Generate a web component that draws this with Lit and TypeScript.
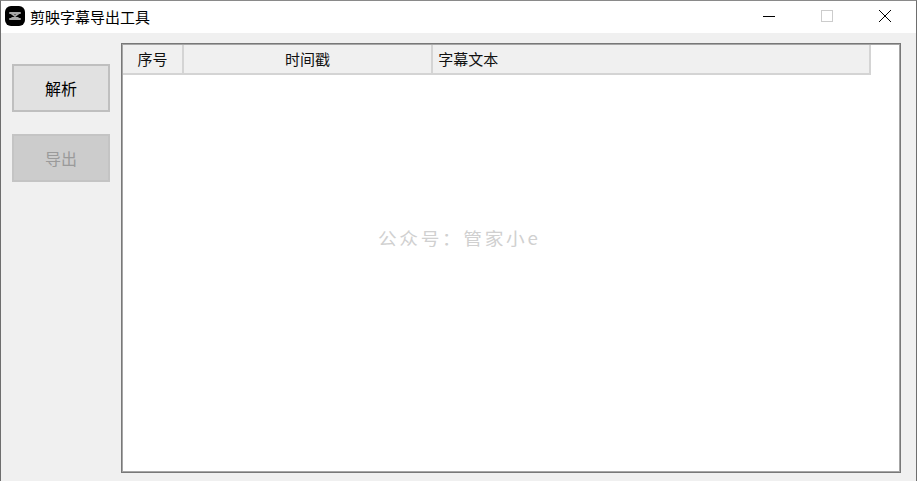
import { LitElement, html, css } from 'lit'
import { customElement } from 'lit/decorators.js'

const columns = [
  { label: '序号', width: 61, align: 'center' },
  { label: '时间戳', width: 250, align: 'center' },
  { label: '字幕文本', width: 437, align: 'left' },
]

@customElement('app-root')
export class AppRoot extends LitElement {
  static styles = css`
    :host {
      display: block;
      box-sizing: border-box;
      width: 917px;
      height: 481px;
      overflow: hidden;
      background: #f0f0f0;
      border-left: 1px solid #6e6e6e;
      border-right: 1px solid #6e6e6e;
      border-top: 1px solid #8a8a8a;
      font-family: 'Noto Sans CJK SC', 'Liberation Sans', sans-serif;
      font-size: 15px;
      color: #000;
    }

    .titlebar {
      display: flex;
      align-items: center;
      height: 32px;
      background: #fff;
      padding-left: 4px;
      padding-right: 2px;
    }

    .logo {
      width: 20px;
      height: 20px;
      margin-right: 5px;
      margin-bottom: 3px;
    }

    .title {
      flex: 1;
      font-size: 15px;
      line-height: 20px;
    }

    .winbtn {
      display: flex;
      align-items: center;
      justify-content: center;
      width: 58px;
      height: 32px;
      padding-bottom: 2px;
      box-sizing: border-box;
    }

    .main {
      display: flex;
      height: 447px;
    }

    .side {
      display: flex;
      flex-direction: column;
      gap: 22px;
      width: 120px;
      box-sizing: border-box;
      padding: 31px 0 0 11px;
    }

    button {
      width: 98px;
      height: 48px;
      box-sizing: border-box;
      padding: 0;
      background: #e1e1e1;
      border: 2px solid #bfbfbf;
      font: inherit;
      font-size: 16px;
      color: #000;
    }

    button:disabled {
      background: #cccccc;
      border-color: #c4c4c4;
      color: #9a9a9a;
    }

    .frame {
      position: relative;
      box-sizing: border-box;
      width: 780px;
      height: 430px;
      margin-top: 10px;
      padding: 1px;
      background: #fff;
      border: 1px solid #787878;
      box-shadow: inset 0 0 0 1px #a6a6a6;
    }

    .head {
      display: flex;
      width: 748px;
      height: 30px;
      box-sizing: border-box;
      background: #f0f0f0;
      border-bottom: 2px solid #d4d4d4;
      border-right: 2px solid #d4d4d4;
    }

    .cell {
      box-sizing: border-box;
      border-right: 2px solid #d4d4d4;
      padding: 0 5px;
      line-height: 28px;
      color: #111;
    }

    .cell:last-child {
      border-right: none;
    }

    .watermark {
      position: absolute;
      left: 256px;
      top: 183px;
      font-size: 17px;
      line-height: 22px;
      letter-spacing: 2.4px;
      color: #d0d0d0;
      white-space: nowrap;
      transform: scaleX(1.1);
      transform-origin: left center;
    }
  `

  renderColumn(col: { label: string; width: number; align: string }) {
    return html`<div class="cell" style="width:${col.width}px;text-align:${col.align}">${col.label}</div>`
  }

  render() {
    return html`
      <div class="titlebar">
        <svg class="logo" viewBox="0 0 20 20">
          <rect width="20" height="20" rx="6" fill="#000" />
          <path d="M5 7h10M5 13h10M6 7l8 6M14 7l-8 6" fill="none" stroke="#a8a8a8" stroke-width="2" stroke-linecap="round" />
        </svg>
        <div class="title">剪映字幕导出工具</div>
        <div class="winbtn">
          <svg width="12" height="12" viewBox="0 0 12 12"><path d="M0 6.500h12" stroke="#000" fill="none" /></svg>
        </div>
        <div class="winbtn">
          <svg width="12" height="12" viewBox="0 0 12 12"><rect x="0.500" y="0.500" width="11" height="11" stroke="#ccc" fill="none" /></svg>
        </div>
        <div class="winbtn">
          <svg width="14" height="14" viewBox="0 0 14 14"><path d="M1 1l12 12M13 1L1 13" stroke="#000" fill="none" /></svg>
        </div>
      </div>
      <div class="main">
        <div class="side">
          <button>解析</button>
          <button disabled>导出</button>
        </div>
        <div class="frame">
          <div class="head">${columns.map((col) => this.renderColumn(col))}</div>
          <div class="watermark">公众号：管家小e</div>
        </div>
      </div>
    `
  }
}
